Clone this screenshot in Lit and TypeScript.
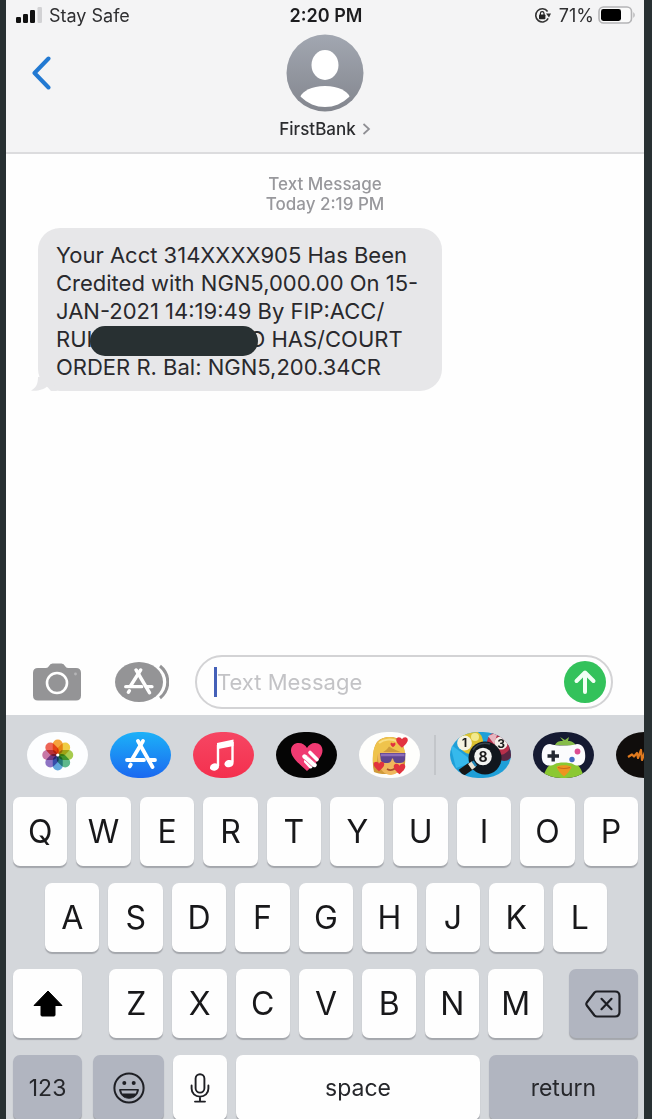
import { LitElement, html, css, svg } from "lit";
import { customElement, state } from "lit/decorators.js";

const petals = ["#f3931a", "#ecc322", "#98c22f", "#42ab78", "#4796d6", "#7a5cba", "#bd5f97", "#ea4a3a"];

const storeGlyph = svg`
  <g fill="none" stroke="#fff" stroke-width="3.8" stroke-linecap="round">
    <path d="M28 9 L42.5 35" />
    <path d="M33 9 L22 27.5" />
    <path d="M17 28 H34" />
    <path d="M39 28 H45" />
    <path d="M20.8 32.6 L19.8 34.4" />
  </g>`;

const photosIcon = html`<svg class="art" viewBox="0 0 61 46" aria-hidden="true">
  <rect width="61" height="46" fill="#fdfeff" />
  <g class="petals">
    ${petals.map((c, i) => svg`<rect x="25.75" y="7.5" width="10" height="15" rx="5" fill=${c} fill-opacity=".85" transform="rotate(${i * 45} 30.75 23)" />`)}
  </g>
  <circle cx="30.75" cy="23" r="1.6" fill="#fff" />
</svg>`;

const storeIcon = html`<svg class="art" viewBox="0 0 61 46" aria-hidden="true">
  <defs><linearGradient id="sky" x1="0" y1="0" x2="0" y2="1"><stop offset="0" stop-color="#1cb1f8" /><stop offset="1" stop-color="#1b68f0" /></linearGradient></defs>
  <rect width="61" height="46" fill="url(#sky)" />${storeGlyph}
</svg>`;

const musicIcon = html`<svg class="art" viewBox="0 0 61 46" aria-hidden="true">
  <defs><linearGradient id="rose" x1="0" y1="0" x2="0" y2="1"><stop offset="0" stop-color="#f64663" /><stop offset="1" stop-color="#f4304e" /></linearGradient></defs>
  <rect width="61" height="46" fill="url(#rose)" />
  <path d="M24 11 L40.5 7.6 V14 L24 17.3 Z" fill="#fff" />
  <path d="M25 13 V34 M39.5 10 V30.5" stroke="#fff" stroke-width="2.4" fill="none" />
  <ellipse cx="21.5" cy="35" rx="4.6" ry="3.6" fill="#fff" transform="rotate(-15 21.5 35)" />
  <ellipse cx="36" cy="31.6" rx="4.6" ry="3.6" fill="#fff" transform="rotate(-15 36 31.6)" />
</svg>`;

const touchIcon = html`<svg class="art" viewBox="0 0 61 46" aria-hidden="true">
  <rect width="61" height="46" fill="#050505" />
  <path d="M31 39 C22 31 15 25 15 18.5 C15 13.5 18.5 11 22.5 11 C26.5 11 29.5 13 31 16 C32.5 13 35.5 11 39 11 C43.5 11 46.5 14 46.5 18.5 C46.5 25 40 31 31 39 Z" fill="#f03a72" />
  <g stroke="#fff" stroke-linecap="round">
    <path d="M34 20.5 L41 27.5" stroke-width="3.6" />
    <path d="M28.5 24.5 L38.5 33" stroke-width="4.4" />
    <path d="M30 29.5 L34.5 34.5" stroke-width="4" />
  </g>
  <path d="M31 23.5 L39.5 31 M28.5 27.5 L36 34.5" stroke="#f0709a" stroke-width="1" />
</svg>`;

const heart = (x: number, y: number, s: number) =>
  svg`<path transform="translate(${x} ${y}) scale(${s})" d="M0 5 C-4 1.5 -5.5 -.5 -5.5 -2.4 C-5.5 -4 -4.4 -5 -3 -5 C-1.6 -5 -.6 -4.2 0 -3 C.6 -4.2 1.6 -5 3 -5 C4.4 -5 5.5 -4 5.5 -2.4 C5.5 -.5 4 1.5 0 5 Z" fill="#e2333f" />`;

const memojiIcon = html`<svg class="art" viewBox="0 0 61 46" aria-hidden="true">
  <rect width="61" height="46" fill="#fefefc" />
  <path d="M15 40 C12.5 30 14 16 18 10 C23 4 37 3 42 9 C47 17 47 30 45 38 C38 43 20 43 15 40 Z" fill="#cf9a3a" />
  <path d="M19 20 H45 C46 32 41 42 32 43 C23 43 18 34 19 20 Z" fill="#efb75c" />
  <path d="M14 30 C13 18 16 6 29 5 C38 4.5 44 10 46 21 C40 20 34 17 30 14.5 C27 20 21 21 19 22 C18.5 25 18 30 18 33 Z" fill="#efc34c" />
  <path d="M20 11 C25 7 33 6.5 38 9.5" stroke="#f9df86" stroke-width="2" fill="none" />
  <path d="M21 21 H46.5 L46 28 Q45 31 41 31 H38 Q35 31 34 26.5 H33 Q32 31 28.5 31 H26 Q22 31 21.6 27 Z" fill="#5f4590" />
  <path d="M22 23 H45.5" stroke="#8c6cb8" stroke-width="2.4" />
  <path d="M28 37 Q32 39.5 36 36.5" stroke="#a94d2b" stroke-width="1.6" fill="none" />
  ${heart(43, 10.5, 1.05)}${heart(20, 34.5, 0.95)}${heart(40.5, 37, 1.05)}${heart(34, 13, 0.45)}
</svg>`;

const poolIcon = html`<svg class="art" viewBox="0 0 61 46" aria-hidden="true">
  <rect width="61" height="46" fill="#1f9fd8" />
  <path d="M0 12 L24 30 L6 36 Z" fill="#36b9ec" />
  <circle cx="54" cy="20" r="9" fill="#5b2642" />
  <circle cx="49" cy="11" r="12" fill="#b92f4a" />
  <path d="M38 4 L48 0 L44 12 Z" fill="#fff" opacity=".65" />
  <circle cx="51" cy="11" r="6.6" fill="#f3eee8" />
  <circle cx="21" cy="10" r="12" fill="#dcc22f" />
  <circle cx="25" cy="5" r="4" fill="#f3ea8c" />
  <circle cx="14.5" cy="11" r="7.4" fill="#f4f2e2" />
  <circle cx="35" cy="26" r="16.5" fill="#11171d" />
  <path d="M23 18 Q29 9 40 12" stroke="#36434d" stroke-width="1.6" fill="none" />
  <circle cx="33" cy="24.5" r="8.8" fill="#f3f4f1" />
  <path d="M11 41 L21 34" stroke="#171717" stroke-width="8" />
  <path d="M20 34.8 L24 32" stroke="#e9e2d2" stroke-width="7" />
  <path d="M23.4 32.4 L25.4 31" stroke="#2185b5" stroke-width="6" />
  <text class="ball" x="14.5" y="15" font-size="12">1</text>
  <text class="ball" x="33" y="29.5" font-size="14">8</text>
  <text class="ball" x="51" y="15.5" font-size="12">3</text>
</svg>`;

const pigeonIcon = html`<svg class="art" viewBox="0 0 61 46" aria-hidden="true">
  <rect width="61" height="46" fill="#151a32" />
  <path d="M10 46 C13 32 22 28 31 28 C40 28 48 32 51 46 Z" fill="#8bc832" />
  <path d="M22 13 C24 9 27 9 30 9 L27 5 L32 8 L36 5 L35 9 C39 9 42 11 43 14 Z" fill="#86bb4a" />
  <path d="M17 12 C24 14 37 14 44 12 C51 12 53 20 52 27 C51 34 44 35 40 32 C36 30 25 30 22 32 C17 35 10 34 9 27 C8 20 10 12 17 12 Z" fill="#fbfbfd" />
  <path d="M14.5 24 H26 M20.2 18.5 V29.5" stroke="#242832" stroke-width="3.4" />
  <circle cx="44.5" cy="19.5" r="2.9" fill="#dc4c91" />
  <circle cx="39" cy="27.5" r="2.7" fill="#426bc0" />
  <path d="M23.5 35 C26 32.5 36 32.5 38.5 35 C37 39 34 42 31 44.5 C28 42 25 39 23.5 35 Z" fill="#ee9420" />
  <path d="M25 35.5 Q31 37.5 37 35.5" stroke="#c9691c" stroke-width="1.2" fill="none" />
</svg>`;

const waveIcon = html`<svg class="art" viewBox="0 0 61 46" aria-hidden="true">
  <rect width="61" height="46" fill="#100d0c" />
  <path d="M12 25 L16 22.5 L18 24.5 L21 21 L22 26 L25 18 L26 28 L29 20 L31 27 L34 16 L36 30 L39 22 L48 24" stroke="#e07a1f" stroke-width="2.2" fill="none" stroke-linejoin="round" />
</svg>`;

const apps = [
  { name: "Photos", art: photosIcon },
  { name: "App Store", art: storeIcon },
  { name: "Music", art: musicIcon },
  { name: "Digital Touch", art: touchIcon },
  { name: "Memoji Stickers", art: memojiIcon },
];
const games = [
  { name: "8 Ball Pool", art: poolIcon },
  { name: "Game Pigeon", art: pigeonIcon },
  { name: "Sound Effects", art: waveIcon },
];

@customElement("phone-status")
class PhoneStatus extends LitElement {
  static styles = css`
    :host { display: grid; grid-template-columns: 1fr auto 1fr; align-items: center; height: 30px; padding: 0 8px 0 10px; font-size: 18px; color: #2f2f31; }
    .carrier, .power { display: flex; align-items: center; }
    .carrier { gap: 7px; }
    .power { justify-content: flex-end; gap: 4px; }
    .lock { margin-right: 4px; }
    .time { font-weight: 600; color: #1d1d1f; }
    svg { display: block; }
  `;
  render() {
    return html`
      <div class="carrier">
        <svg width="26" height="17" viewBox="0 0 26 17" aria-hidden="true">
          <rect x="0" y="10" width="5" height="6" rx="1.2" fill="#111" />
          <rect x="7" y="7" width="5" height="9" rx="1.2" fill="#111" />
          <rect x="14" y="3" width="5" height="13" rx="1.2" fill="#111" />
          <rect x="21.5" y="0" width="4.5" height="16" rx="1.2" fill="#d2d2d4" />
        </svg>
        <span>Stay Safe</span>
      </div>
      <div class="time">2:20 PM</div>
      <div class="power">
        <svg class="lock" width="17" height="17" viewBox="0 0 17 17" aria-hidden="true">
          <path d="M13.6 4.4 A6.6 6.6 0 1 0 14.2 11.4" fill="none" stroke="#333" stroke-width="1.6" />
          <path d="M12 6.6 H17 L15 10.4 Z" fill="#333" />
          <rect x="5" y="7.4" width="6.4" height="4.8" rx=".8" fill="#222" />
          <path d="M6.4 8 V6.4 A1.8 1.8 0 0 1 10 6.4 V8" fill="none" stroke="#222" stroke-width="1.2" />
        </svg>
        <span>71%</span>
        <svg width="38" height="18" viewBox="0 0 38 18" aria-hidden="true">
          <rect x="1" y="1" width="32.5" height="16" rx="4.5" fill="#fafafa" stroke="#b4b4b6" stroke-width="1.6" />
          <rect x="3" y="3" width="20" height="12" rx="2.4" fill="#000" />
          <path d="M35.4 6 Q38 9 35.4 12 Z" fill="#aeaeb0" />
        </svg>
      </div>
    `;
  }
}

@customElement("app-strip")
class AppStrip extends LitElement {
  static styles = css`
    :host { display: flex; gap: 22px; height: 46px; padding: 17px 0 19px 21px; overflow: hidden; }
    .app { flex: none; width: 61px; height: 46px; padding: 0; border: 0; background: none; border-radius: 28px / 23px; overflow: hidden; }
    .art { display: block; width: 61px; height: 46px; }
    .petals { isolation: isolate; }
    .petals rect { mix-blend-mode: multiply; }
    .ball { font-family: Inter, sans-serif; font-weight: 700; fill: #1a1a1a; text-anchor: middle; }
    .divider { flex: none; width: 2px; height: 40px; margin: 3px -8px; background: #c3c6ca; }
  `;
  render() {
    const button = (a: { name: string; art: unknown }) => html`<button class="app" aria-label=${a.name}>${a.art}</button>`;
    return html`${apps.map(button)}<span class="divider"></span>${games.map(button)}`;
  }
}

@customElement("key-board")
class KeyBoard extends LitElement {
  static styles = css`
    :host { display: flex; flex-direction: column; gap: 17px; padding: 0 6px 0 7px; }
    .row { display: flex; gap: 9px; height: 69px; }
    .middle { padding: 0 31px 0 32px; }
    .last { height: 65px; margin-bottom: -1px; }
    .key { flex: 54 1 0; min-width: 0; padding: 0; border: 0; border-radius: 7px; background: #fefefe; box-shadow: 0 2px 1px #a4a7ac; color: #18181a; font-family: inherit; font-size: 32px; line-height: 38px; display: flex; align-items: center; justify-content: center; }
    .shift { flex-grow: 69; margin-right: 18px; }
    .delete { flex-grow: 69; margin-left: 17px; }
    .dim { background: #b1b5c0; }
    .word { font-size: 23px; color: #26272b; }
    .digits { flex-grow: 69; }
    .emoji { flex-grow: 71; margin-left: 2px; }
    .space { flex-grow: 243; }
    .return { flex-grow: 149; }
    svg { display: block; }
  `;
  private keys(letters: string) {
    return [...letters].map((l) => html`<button class="key">${l}</button>`);
  }
  render() {
    return html`
      <div class="row">${this.keys("QWERTYUIOP")}</div>
      <div class="row middle">${this.keys("ASDFGHJKL")}</div>
      <div class="row">
        <button class="key shift" aria-label="Shift">
          <svg width="30" height="27" viewBox="0 0 30 27" aria-hidden="true"><path d="M15 1 L29 15.5 H22 V25 Q22 26 21 26 H9 Q8 26 8 25 V15.5 H1 Z" fill="#000" stroke="#000" stroke-linejoin="round" /></svg>
        </button>
        ${this.keys("ZXCVBNM")}
        <button class="key dim delete" aria-label="Delete">
          <svg width="36" height="28" viewBox="0 0 36 28" fill="none" stroke="#1e1f24" stroke-width="2.2" stroke-linecap="round" stroke-linejoin="round" aria-hidden="true">
            <path d="M12 1.5 H30 Q34.5 1.5 34.5 6 V22 Q34.5 26.5 30 26.5 H12 Q10.5 26.5 9.5 25.5 L1.8 15.5 Q.8 14 1.8 12.5 L9.5 2.5 Q10.5 1.5 12 1.5 Z" />
            <path d="M16.5 8.8 L26.5 19.2 M26.5 8.8 L16.5 19.2" />
          </svg>
        </button>
      </div>
      <div class="row last">
        <button class="key dim word digits">123</button>
        <button class="key dim emoji" aria-label="Emoji">
          <svg width="32" height="32" viewBox="0 0 32 32" aria-hidden="true">
            <circle cx="16" cy="16" r="14.6" fill="none" stroke="#1e1f24" stroke-width="2" />
            <circle cx="11.3" cy="11" r="2" fill="#1e1f24" /><circle cx="20.7" cy="11" r="2" fill="#1e1f24" />
            <path d="M6.6 17.5 H25.4 C25 23 21 26.2 16 26.2 C11 26.2 7 23 6.6 17.5 Z" fill="#1e1f24" stroke="#1e1f24" stroke-linejoin="round" />
            <path d="M8.2 18.6 H23.8 L22.8 21.4 H9.2 Z" fill="#b1b5c0" />
          </svg>
        </button>
        <button class="key mic" aria-label="Dictate">
          <svg width="20" height="30" viewBox="0 0 20 30" fill="none" stroke="#1e1f24" stroke-width="1.9" stroke-linecap="round" aria-hidden="true">
            <rect x="5.6" y="1.2" width="8.8" height="18.4" rx="4.4" />
            <path d="M1.6 12.5 V15.5 C1.6 20.5 5.2 23.6 10 23.6 C14.8 23.6 18.4 20.5 18.4 15.5 V12.5 M10 23.6 V28.6 M5 28.6 H15" />
          </svg>
        </button>
        <button class="key word space">space</button>
        <button class="key dim word return">return</button>
      </div>
    `;
  }
}

@customElement("app-root")
class AppRoot extends LitElement {
  static styles = css`
    :host { display: flex; flex-direction: column; box-sizing: border-box; height: 100vh; overflow: hidden; border: solid #283032; border-width: 0 8px 0 6px; background: #fefefe; font-family: Inter, "Liberation Sans", sans-serif; color: #2b2c2f; }
    svg { display: block; }
    button { border: 0; padding: 0; background: none; font: inherit; color: inherit; }
    .header { background: #f4f4f5; border-bottom: 2px solid #dcdcde; }
    .contact { display: grid; grid-template-columns: 1fr auto 1fr; align-items: start; padding: 4px 24px 13px; }
    .back { justify-self: start; padding-top: 22px; }
    .person { display: flex; flex-direction: column; align-items: center; gap: 7px; }
    .name { display: flex; align-items: center; gap: 6px; font-size: 17px; font-weight: 500; line-height: 20px; }
    .thread { flex: 1; min-height: 0; padding: 20px 32px; }
    .stamp { margin: 0 0 14px; text-align: center; color: #98989c; font-size: 17px; font-weight: 500; line-height: 20px; }
    .bubble { position: relative; width: fit-content; box-sizing: border-box; padding: 13px 24px 10px 18px; border-radius: 22px; background: #e7e7e9; color: #29292d; font-size: 22px; line-height: 28px; white-space: nowrap; }
    .bubble p { margin: 0; }
    .tail { position: absolute; left: -7px; bottom: 0; }
    .redacted { display: inline-block; position: relative; width: 168px; height: 30px; margin: -8px -10px -8px -2px; border-radius: 15px; background: #283032; vertical-align: middle; }
    .composer { display: flex; align-items: center; padding: 0 31px 6px 26px; }
    .drawer { margin: 0 26px 0 33px; }
    .field { flex: 1; min-width: 0; display: flex; align-items: center; box-sizing: border-box; height: 54px; padding: 0 5px 0 17px; border: 2px solid #d3d3d5; border-radius: 27px; background: #fefefe; }
    .caret { width: 3px; height: 30px; background: #4460b8; }
    .input { flex: 1; min-width: 0; padding: 0; border: 0; outline: 0; background: none; color: #2b2c2f; font: inherit; font-size: 22px; line-height: 28px; }
    .input::placeholder { color: #c3c3c6; opacity: 1; }
    .tray { background: #d4d7db; }
  `;

  @state() private draft = "";

  render() {
    return html`
      <header class="header">
        <phone-status></phone-status>
        <div class="contact">
          <button class="back" aria-label="Back">
            <svg width="22" height="34" viewBox="0 0 22 34" aria-hidden="true"><path d="M18.5 2.5 L4.5 17 L18.5 31.5" fill="none" stroke="#2279d2" stroke-width="4" stroke-linecap="round" stroke-linejoin="round" /></svg>
          </button>
          <div class="person">
            <svg width="78" height="78" viewBox="0 0 78 78" aria-hidden="true">
              <defs>
                <linearGradient id="slate" x1="0" y1="0" x2="0" y2="1"><stop offset="0" stop-color="#a2a7b1" /><stop offset="1" stop-color="#83868e" /></linearGradient>
                <clipPath id="disc"><circle cx="39" cy="39" r="34" /></clipPath>
              </defs>
              <circle cx="39" cy="39" r="38.5" fill="url(#slate)" />
              <ellipse cx="39" cy="31" rx="13.5" ry="15" fill="#fff" />
              <path d="M39 52 C53 52 61 57 64 63 A34 34 0 0 1 14 63 C17 57 25 52 39 52 Z" fill="#fff" clip-path="url(#disc)" />
            </svg>
            <button class="name">FirstBank
              <svg width="9" height="14" viewBox="0 0 9 14" aria-hidden="true"><path d="M1.5 2 L7 7 L1.5 12" fill="none" stroke="#8e8e93" stroke-width="1.7" /></svg>
            </button>
          </div>
        </div>
      </header>

      <main class="thread">
        <p class="stamp">Text Message<br />Today 2:19 PM</p>
        <div class="bubble">
          <svg class="tail" width="26" height="14" viewBox="0 0 26 14" aria-hidden="true"><path d="M7 0 C7 7 5 11 0 13.5 C6 14.5 13 12.5 16 9.5 L20 14 L26 14 L20 0 Z" fill="#e7e7e9" /></svg>
          <p>
            Your Acct 314XXXX905 Has Been<br />Credited with NGN5,000.00 On 15-<br />JAN-2021
            14:19:49 By FIP:ACC/<br />RUI<span class="redacted"></span>O HAS/COURT<br />ORDER R. Bal: NGN5,200.34CR
          </p>
        </div>
      </main>

      <div class="composer">
        <button aria-label="Camera">
          <svg width="50" height="38" viewBox="0 0 50 38" aria-hidden="true">
            <path d="M6 5 H14 Q16 5 17 3 Q18 .5 20.5 .5 H29.5 Q32 .5 33 3 Q34 5 36 5 H44 Q49 5 49 10 V32.5 Q49 37.5 44 37.5 H6 Q1 37.5 1 32.5 V10 Q1 5 6 5 Z" fill="#949496" />
            <circle cx="25" cy="20" r="10" fill="none" stroke="#fff" stroke-width="2.6" />
            <circle cx="43.5" cy="11" r="1.4" fill="#b5b5b7" />
          </svg>
        </button>
        <button class="drawer" aria-label="Apps">
          <svg width="54" height="40" viewBox="0 0 54 40" aria-hidden="true">
            <ellipse cx="24" cy="20" rx="24" ry="20" fill="#949496" />
            <path d="M43 3 A24 22 0 0 1 43 37" fill="none" stroke="#fff" stroke-width="2.6" />
            <path d="M45 4 A22 21 0 0 1 45 36" fill="none" stroke="#949496" stroke-width="3" />
            <g transform="translate(-5 0) scale(.93 .88)">${storeGlyph}</g>
          </svg>
        </button>
        <div class="field">
          <span class="caret"></span>
          <input class="input" aria-label="Text Message" placeholder="Text Message" .value=${this.draft}
            @input=${(e: Event) => { this.draft = (e.target as HTMLInputElement).value; }} />
          <button aria-label="Send">
            <svg width="42" height="42" viewBox="0 0 42 42" aria-hidden="true">
              <circle cx="21" cy="21" r="21" fill="#33c25b" />
              <path d="M21 31 V12 M12.5 20 L21 11.5 L29.5 20" fill="none" stroke="#f1fff4" stroke-width="4" stroke-linecap="round" stroke-linejoin="round" />
            </svg>
          </button>
        </div>
      </div>

      <section class="tray" aria-label="Keyboard">
        <app-strip></app-strip>
        <key-board></key-board>
      </section>
    `;
  }
}
